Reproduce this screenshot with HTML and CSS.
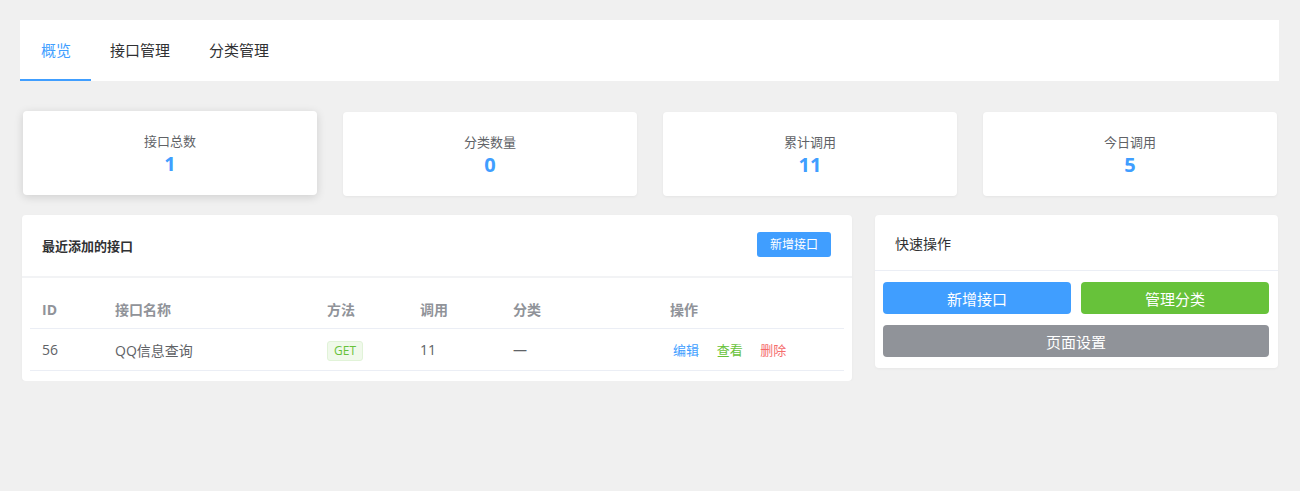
FILE: index.html
```html
<!DOCTYPE html>
<html lang="zh-CN">
<head>
    <meta charset="UTF-8">
    <meta name="viewport" content="width=device-width, initial-scale=1.0">
    <title>接口管理后台</title>
    <link rel="stylesheet" href="styles.css">
</head>
<body>
    <div class="page">
        <div class="tabs">
            <div class="tab active">概览</div>
            <div class="tab">接口管理</div>
            <div class="tab">分类管理</div>
        </div>

        <div class="stats">
            <div class="stat-card raised">
                <div class="stat-label">接口总数</div>
                <div class="stat-value">1</div>
            </div>
            <div class="stat-card">
                <div class="stat-label">分类数量</div>
                <div class="stat-value">0</div>
            </div>
            <div class="stat-card">
                <div class="stat-label">累计调用</div>
                <div class="stat-value">11</div>
            </div>
            <div class="stat-card">
                <div class="stat-label">今日调用</div>
                <div class="stat-value">5</div>
            </div>
        </div>

        <div class="panels">
            <div class="panel recent">
                <div class="panel-header">
                    <span class="panel-title">最近添加的接口</span>
                    <button class="btn-small" type="button">新增接口</button>
                </div>
                <div class="table-wrap">
                    <table>
                        <thead>
                            <tr>
                                <th class="col-id">ID</th>
                                <th class="col-name">接口名称</th>
                                <th class="col-method">方法</th>
                                <th class="col-calls">调用</th>
                                <th class="col-cat">分类</th>
                                <th>操作</th>
                            </tr>
                        </thead>
                        <tbody>
                            <tr>
                                <td>56</td>
                                <td>QQ信息查询</td>
                                <td><span class="tag">GET</span></td>
                                <td>11</td>
                                <td>—</td>
                                <td class="actions">
                                    <a class="edit">编辑</a>
                                    <a class="view">查看</a>
                                    <a class="del">删除</a>
                                </td>
                            </tr>
                        </tbody>
                    </table>
                </div>
            </div>

            <div class="panel quick">
                <div class="panel-header quick-header">
                    <span>快速操作</span>
                </div>
                <div class="quick-body">
                    <button class="btn blue" type="button">新增接口</button>
                    <button class="btn green" type="button">管理分类</button>
                    <button class="btn gray wide" type="button">页面设置</button>
                </div>
            </div>
        </div>
    </div>
</body>
</html>
```

FILE: styles.css
```css
body {
    margin: 0;
    padding: 0;
    background-color: #f0f0f0;
    font-family: "Open Sans", "Noto Sans CJK SC", sans-serif;
    color: #303133;
}

.page {
    padding: 20px 21px 0 20px;
}

/* Tabs */
.tabs {
    display: flex;
    background: #fff;
    height: 61px;
}

.tab {
    padding: 0 20px 0 20px;
    font-size: 15px;
    line-height: 61px;
    height: 59px;
    color: #303133;
    border-bottom: 2px solid transparent;
}

.tab + .tab {
    padding-left: 19px;
}

.tab.active {
    color: #409eff;
    border-bottom-color: #409eff;
    padding: 0 20px 0 21px;
}

/* Stat cards */
.stats {
    display: grid;
    grid-template-columns: repeat(4, 294px);
    gap: 26px;
    margin: 30px 0 0 3px;
}

.stat-card {
    background: #fff;
    border-radius: 4px;
    height: 84px;
    display: flex;
    flex-direction: column;
    align-items: center;
    justify-content: center;
    box-shadow: 0 1px 3px rgba(0, 0, 0, 0.05);
    margin-top: 1px;
}

.stat-card.raised {
    margin-top: 0;
    box-shadow: 0 2px 10px rgba(0, 0, 0, 0.14);
}

.stat-label {
    font-size: 13px;
    color: #606266;
    line-height: 18px;
    margin-top: 4px;
}

.stat-value {
    font-size: 20px;
    font-weight: bold;
    color: #409eff;
    line-height: 28px;
}

/* Panels */
.panels {
    display: flex;
    gap: 23px;
    margin: 19px 0 0 2px;
    align-items: flex-start;
}

.panel {
    background: #fff;
    border-radius: 4px;
    box-shadow: 0 1px 3px rgba(0, 0, 0, 0.04);
}

.recent {
    width: 830px;
    padding-bottom: 10px;
}

.quick {
    width: 403px;
}

.panel-header {
    display: flex;
    justify-content: space-between;
    align-items: center;
    height: 61px;
    padding: 0 21px 0 20px;
    border-bottom: 2px solid #f2f3f5;
}

.panel-title {
    font-size: 13px;
    font-weight: bold;
    color: #303133;
    margin-top: 0;
}

.btn-small {
    background: #409eff;
    color: #fff;
    border: none;
    border-radius: 3px;
    font-family: inherit;
    font-size: 12px;
    width: 74px;
    height: 25px;
    padding: 0;
    margin-top: -3px;
}

.table-wrap {
    padding: 12px 8px 0 8px;
}

table {
    width: 100%;
    border-collapse: collapse;
}

th, td {
    text-align: left;
    padding: 0 12px;
    border-bottom: 1px solid #ebeef5;
}

th {
    height: 38px;
    font-size: 14px;
    font-weight: bold;
    color: #909399;
}

td {
    height: 41px;
    font-size: 14px;
    color: #606266;
}

.col-id { width: 49px; }
.col-name { width: 188px; }
.col-method { width: 69px; }
.col-calls { width: 69px; }
.col-cat { width: 133px; }

.tag {
    display: inline-block;
    font-size: 12px;
    color: #67c23a;
    background: #f0f9eb;
    border: 1px solid #e1f3d8;
    border-radius: 3px;
    padding: 0 6px;
    line-height: 18px;
    margin-top: 2px;
}

.actions a {
    font-size: 13px;
    margin-left: 3px;
    margin-right: 11px;
}

.actions .edit { color: #409eff; }
.actions .view { color: #67c23a; }
.actions .del { color: #f56c6c; }

/* Quick actions */
.quick-header {
    height: 55px;
    font-size: 14px;
    color: #303133;
    border-bottom: 1px solid #ebeef5;
}

.quick-body {
    display: grid;
    grid-template-columns: 1fr 1fr;
    gap: 11px 10px;
    padding: 11px 9px 11px 8px;
}

.btn {
    border: none;
    border-radius: 4px;
    height: 32px;
    color: #fff;
    font-family: inherit;
    font-size: 15px;
    padding: 0;
}

.btn.blue { background: #409eff; }
.btn.green { background: #67c23a; }
.btn.gray { background: #909399; }
.btn.wide { grid-column: 1 / 3; }
```
